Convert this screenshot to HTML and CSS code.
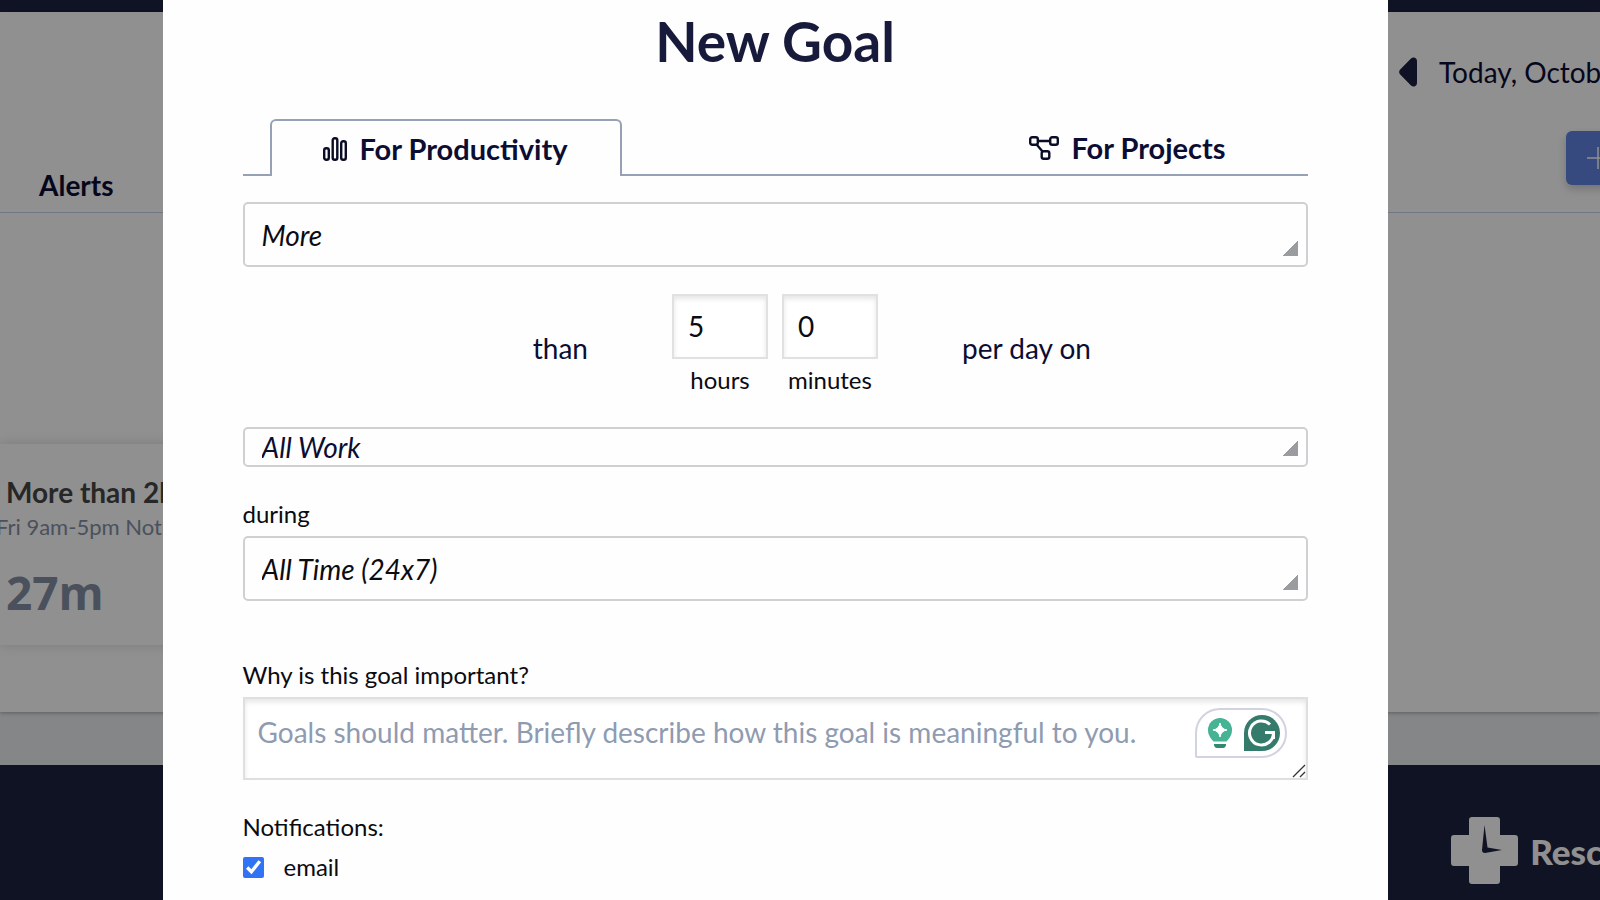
FILE: index.html
```html
<!DOCTYPE html>
<html lang="en">
  <head>
    <meta charset="UTF-8" />
    <meta name="viewport" content="width=device-width, initial-scale=1.0" />
    <title>New Goal</title>
    <link rel="stylesheet" href="styles.css">
  </head>
  <body>
    <div class="page">
      <div class="navbar"></div>
      <main class="content">
        <header class="goals-header">
          <a href="#" class="alerts-link">Alerts</a>
          <div class="header-right">
            <div class="date-picker">
              <button class="prev-button" aria-label="Previous day">
                <svg width="18" height="30" viewBox="0 0 18 30">
                  <path d="M1.2 12.5 12 1.5Q14 0 16 .8 18 1.5 18 4V26Q18 28.5 16 29.2 14 30 12 28.5L1.2 17.5Q-1 15 1.2 12.5Z" fill="#1c2140" />
                </svg>
              </button>
              <span class="date-text">Today, October</span>
            </div>
            <button class="add-button" aria-label="Add goal">
              <svg width="24" height="24" viewBox="0 0 24 24">
                <path d="M12 1V23M1 12H23" stroke="#fff" stroke-width="1.5" />
              </svg>
            </button>
          </div>
        </header>
        <section class="goal-card">
          <h3 class="goal-name">More than 2h</h3>
          <p class="goal-time">Fri 9am-5pm Not</p>
          <p class="goal-value">27m</p>
        </section>
      </main>
      <footer class="footer">
        <svg width="67" height="67" viewBox="0 0 67 67">
          <path d="M21 0H46Q49 0 49 3V18H64Q67 18 67 21V46Q67 49 64 49H49V64Q49 67 46 67H21Q18 67 18 64V49H3Q0 49 0 46V21Q0 18 3 18H18V3Q18 0 21 0Z" fill="#fff" />
          <path d="M33.5 8 36.5 30.5 51 33 34 36Q31 36 31 33Z" fill="#1e2340" />
        </svg>
        <span class="footer-name">RescueTime</span>
      </footer>
    </div>

    <div class="overlay">
      <form class="modal">
        <h1 class="modal-title">New Goal</h1>

        <div class="tabs">
          <button type="button" class="tab active">
            <svg width="24" height="24" viewBox="0 0 24 24" fill="none" stroke="#0b0d26" stroke-width="2.4">
              <rect x="1.2" y="11.2" width="4.600" height="11.600" rx="2" />
              <rect x="9.700" y="1.2" width="4.600" height="21.600" rx="2" />
              <rect x="18.200" y="4.2" width="4.600" height="18.600" rx="2" />
            </svg>
            For Productivity
          </button>
          <button type="button" class="tab">
            <svg width="30" height="24" viewBox="0 0 30 24" fill="none" stroke="#0b0d26" stroke-width="2.4">
              <rect x="1.2" y="1.2" width="7.600" height="7.600" rx="2" />
              <rect x="21.200" y="1.2" width="7.600" height="7.600" rx="2" />
              <rect x="12.700" y="15.200" width="7.600" height="7.600" rx="2" />
              <path d="M9 5H21M8 9 14 16" />
            </svg>
            For Projects
          </button>
        </div>

        <select class="select" aria-label="Goal type">
          <option>More</option>
        </select>

        <div class="amount">
          <span class="amount-text than">than</span>
          <div class="amount-inputs">
            <div class="amount-field">
              <input type="text" inputmode="numeric" id="hours" value="5" />
              <label for="hours">hours</label>
            </div>
            <div class="amount-field">
              <input type="text" inputmode="numeric" id="minutes" value="0" />
              <label for="minutes">minutes</label>
            </div>
          </div>
          <span class="amount-text">per day on</span>
        </div>

        <select class="select select-small" aria-label="Activity">
          <option>All Work</option>
        </select>

        <label class="label" for="during">during</label>
        <select class="select" id="during">
          <option>All Time (24x7)</option>
        </select>

        <label class="label label-why" for="why">Why is this goal important?</label>
        <div class="why-box">
          <textarea id="why" placeholder="Goals should matter. Briefly describe how this goal is meaningful to you."></textarea>
          <!-- writing helper badge -->
          <div class="helper">
            <svg width="24" height="30" viewBox="0 0 24 30">
              <path d="M12 0A12 12 0 0 1 24 12C24 17 21.500 20 18.500 23.500H5.500C2.500 20 0 17 0 12A12 12 0 0 1 12 0Z" fill="#45b394" />
              <path d="M12 5Q13 11 19 12 13 13 12 19 11 13 5 12 11 11 12 5Z" fill="#fff" stroke="#fff" />
              <path d="M6 26H18V27Q17.500 30 15 30H9Q6.500 30 6 27Z" fill="#2f8871" />
            </svg>
            <svg width="36" height="36" viewBox="0 0 36 36">
              <path d="M18 0A18 18 0 0 1 18 36H0V18A18 18 0 0 1 18 0Z" fill="#347b6b" />
              <path d="M26 9.500A12 12 0 1 0 29.500 17.500H21M29.500 16V24" fill="none" stroke="#fff" stroke-width="3" />
            </svg>
          </div>
          <svg class="resize-handle" width="14" height="14" viewBox="0 0 14 14">
            <path d="M1 13 13 1M8 13 13 8" stroke="#333" stroke-width="1.3" />
          </svg>
        </div>

        <fieldset class="notifications">
          <legend>Notifications:</legend>
          <input type="checkbox" id="email" checked />
          <label for="email">email</label>
        </fieldset>
      </form>
    </div>
  </body>
</html>
```
FILE: styles.css
```css
* {
  margin: 0;
  padding: 0;
  box-sizing: border-box;
}

body {
  font-family: Lato, "Open Sans", sans-serif;
  font-size: 28px;
  color: #0b0d33;
  overflow: hidden;
}

button {
  font: inherit;
  color: inherit;
  background: none;
  border: none;
  cursor: pointer;
}

/* Page behind the modal */
.page {
  display: flex;
  flex-direction: column;
  height: 100vh;
  overflow: hidden;
  background-color: #ecedf1;
}

.navbar {
  flex: 0 0 12px;
  background-color: #1e2340;
}

.content {
  flex: 0 0 700px;
  background-color: #fff;
  box-shadow: 0 1px 4px rgba(0, 0, 0, 0.3);
}

.goals-header {
  display: flex;
  align-items: flex-end;
  justify-content: space-between;
  height: 201px;
  padding-left: 39px;
  border-bottom: 1px solid #c6d2ec;
}

.alerts-link {
  padding-bottom: 10px;
  font-weight: 700;
  color: inherit;
  text-decoration: none;
}

.header-right {
  width: 201px;
  height: 100%;
  padding-top: 39px;
  white-space: nowrap;
}

.date-picker {
  display: flex;
  align-items: center;
  gap: 22px;
  height: 42px;
}

.prev-button {
  display: flex;
}

.add-button {
  display: flex;
  align-items: center;
  width: 160px;
  height: 54px;
  margin: 38px 0 0 167px;
  padding-left: 20px;
  border-radius: 6px;
  background-color: #6183e3;
  box-shadow: 0 4px 8px rgba(0, 0, 0, 0.2);
}

.goal-card {
  width: 400px;
  height: 201px;
  margin-top: 231px;
  padding: 30px 6px;
  box-shadow: 0 0 12px rgba(0, 0, 0, 0.15);
  white-space: nowrap;
}

.goal-name {
  font-size: 28px;
  line-height: 36px;
  color: #454545;
}

.goal-time {
  margin-left: -10px;
  font-size: 22px;
  line-height: 34px;
  color: #8490a5;
}

.goal-value {
  margin-top: 18px;
  font-family: "Open Sans", sans-serif;
  font-size: 46px;
  font-weight: 700;
  line-height: 60px;
  color: #8490a5;
}

.footer {
  display: flex;
  align-items: center;
  justify-content: flex-end;
  gap: 12px;
  flex: 1;
  margin-top: 53px;
  padding-top: 36px;
  margin-right: -116px;
  background-color: #1e2340;
  font-size: 35px;
  font-weight: 900;
  color: #fff;
}

.footer svg {
  flex-shrink: 0;
}

/* Modal */
.overlay {
  position: fixed;
  inset: 0;
  display: flex;
  justify-content: center;
  background-color: rgba(0, 0, 0, 0.435);
}

.modal {
  width: 77%;
  max-width: 1225px;
  margin-right: 50px;
  padding: 7px 80px;
  background-color: #fefefe;
}

.modal-title {
  font-size: 55px;
  line-height: 68px;
  text-align: center;
  color: #171a3a;
}

.tabs {
  display: flex;
  justify-content: space-between;
  margin: 44px 0 26px;
  padding: 0 4px 0 27px;
  box-shadow: inset 0 -2px #97a1b5;
}

.tab {
  display: flex;
  align-items: center;
  justify-content: center;
  gap: 12px;
  flex: 0 0 352px;
  height: 57px;
  font-size: 29px;
  font-weight: 700;
}

.tab.active {
  border: 2px solid #97a1b5;
  border-bottom: none;
  border-radius: 6px 6px 0 0;
  background-color: #fefefe;
}

.select {
  display: block;
  width: 100%;
  height: 65px;
  padding: 0 17px;
  border: 2px solid #d0d0d2;
  border-radius: 5px;
  appearance: none;
  background: linear-gradient(to bottom right, transparent 50%, #9b9ca0 50%) no-repeat right 8px bottom 9px / 16px 15px;
  font: inherit;
  font-style: italic;
  color: #0b0b10;
}

.select-small {
  height: 40px;
  color: #0b0d33;
}

.amount {
  display: flex;
  align-items: center;
  justify-content: center;
  gap: 84px;
  height: 160px;
  padding-bottom: 6px;
}

/* both sides share one width so the inputs stay centered */
.amount-text {
  flex: 0 0 140px;
  padding-top: 8px;
}

.than {
  text-align: right;
}

.amount-inputs {
  display: flex;
  gap: 14px;
}

.amount-field {
  display: flex;
  flex-direction: column;
  align-items: center;
  gap: 6px;
  width: 96px;
}

.amount-field input {
  width: 100%;
  height: 65px;
  padding: 0 14px;
  border: 2px solid #e1e1e3;
  box-shadow: inset 0 3px 5px rgba(0, 0, 0, 0.1);
  background-color: #fff;
  font: inherit;
  color: #0b0b10;
}

.amount-field label,
.label,
.notifications {
  font-size: 24px;
  line-height: 30px;
  color: #0b0b10;
}

.label {
  display: block;
  margin: 32px 0 7px;
}

.label-why {
  margin-top: 59px;
}

.why-box {
  position: relative;
}

.why-box textarea {
  display: block;
  width: 100%;
  height: 83px;
  padding: 15px 13px;
  border: 2px solid #dfdfe2;
  box-shadow: inset 0 3px 5px rgba(0, 0, 0, 0.1);
  background-color: #fff;
  font: inherit;
  line-height: 36px;
  resize: none;
}

.why-box textarea::placeholder {
  color: #8f9bb0;
}

.resize-handle {
  position: absolute;
  right: 2px;
  bottom: 2px;
}

.helper {
  position: absolute;
  top: 11px;
  right: 21px;
  display: flex;
  align-items: center;
  gap: 12px;
  width: 92px;
  height: 50px;
  padding-left: 11px;
  border: 2px solid #d2d3e0;
  border-radius: 25px 25px 25px 2px;
  background-color: #fff;
}

.helper svg {
  flex-shrink: 0;
}

.notifications {
  display: flex;
  align-items: center;
  gap: 20px;
  margin-top: 32px;
  border: none;
}

.notifications legend {
  margin-bottom: 10px;
}

.notifications input {
  width: 21px;
  height: 21px;
  accent-color: #3074f5;
}
```
